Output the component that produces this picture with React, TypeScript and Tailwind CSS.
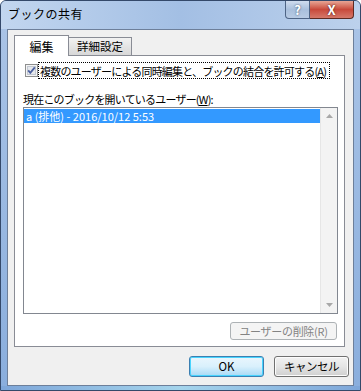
import React from 'react';

const font = { fontFamily: '"Noto Sans CJK JP", "Noto Sans", sans-serif' };

function CheckBox() {
  return (
    <svg width="13" height="13" viewBox="0 0 13 13" className="shrink-0">
      <rect x="0.5" y="0.5" width="12" height="12" fill="#f4f4f4" stroke="#8e8f8f" />
      <rect x="2.5" y="2.5" width="8" height="8" fill="#e6e8ec" stroke="#c2c8d2" />
      <path d="M3.2 6.4 L5.3 8.8 L9.8 3.4" fill="none" stroke="#4c61a0" strokeWidth="1.8" />
    </svg>
  );
}

function Arrow({ up }: { up?: boolean }) {
  return (
    <svg width="7" height="4" viewBox="0 0 7 4">
      <path d={up ? 'M0 4 L3.5 0 L7 4 Z' : 'M0 0 L3.5 4 L7 0 Z'} fill="#a8a8a8" />
    </svg>
  );
}

export default function App() {
  return (
    <div className="w-[361px] h-[391px] flex flex-col bg-[#8fb1de] border border-[#34496a] rounded-t-[6px] overflow-hidden" style={font}>
      {/* title bar */}
      <div className="h-[28px] shrink-0 flex items-start justify-between bg-gradient-to-r from-[#c2d6ef] via-[#a3bfe4] to-[#bcd1ec]">
        <div className="pl-[7px] pt-[6px] text-[12px] leading-[14px] text-black tracking-[0.5px]">ブックの共有</div>
        <div className="flex mr-[6px]">
          <div className="w-[25px] h-[18px] border border-[#4e6485] border-t-0 rounded-bl-[4px] bg-gradient-to-b from-[#cfdcee] via-[#a9bfdc] to-[#b8cbe4] flex items-center justify-center text-white text-[13px] font-bold leading-none [text-shadow:0_0_2px_#2b3f5e]">?</div>
          <div className="w-[44px] h-[18px] border border-[#5e2a22] border-t-0 border-l-0 rounded-br-[4px] bg-gradient-to-b from-[#e7a595] via-[#c8493b] to-[#d5786a] flex items-center justify-center text-white text-[13px] font-bold leading-none [text-shadow:0_0_2px_#3a0e08]">X</div>
        </div>
      </div>

      {/* body with side frames */}
      <div className="flex-1 flex px-[6px] bg-gradient-to-b from-[#a9c3e6] to-[#8aaedd]">
        <div className="flex-1 flex flex-col border border-[#6d7f9a] bg-[#f0f0f0] px-[6px] pt-[4px] pb-[8px]">
          {/* tabs */}
          <div className="flex items-end h-[21px] leading-none">
            <div className="w-[55px] h-[21px] border border-b-0 border-[#898c95] bg-white flex items-center justify-center pt-[2px] -mb-px relative z-10 text-[12px]">編集</div>
            <div className="w-[63px] h-[18px] border border-l-0 border-b-0 border-[#898c95] bg-gradient-to-b from-[#f2f2f2] to-[#d8d8d8] flex items-center justify-center pt-[1px] text-[11.5px]">詳細設定</div>
          </div>

          {/* panel */}
          <div className="w-[331px] h-[292px] border border-[#898c95] bg-white flex flex-col pl-[8px] pr-[6px] pt-[6px] text-[11px] leading-[14px] text-black tracking-[-0.8px]">
            <div className="flex items-center h-[17px]">
              <div className="pl-[2px] w-[15px] shrink-0"><CheckBox /></div>
              <div className="shrink-0 border border-dotted border-black pl-[1px] pr-[3px] h-[17px] flex items-center whitespace-nowrap">
                <span>複数のユーザーによる同時編集と、ブックの結合を許可する(<span className="underline">A</span>)</span>
              </div>
            </div>

            <div className="mt-[13px] h-[14px] whitespace-nowrap">
              現在このブックを開いているユーザー(<span className="underline">W</span>):
            </div>

            <div className="mt-[1px] w-[315px] h-[207px] border border-[#828790] bg-white flex">
              <div className="flex-1 pt-px">
                <div className="h-[14px] bg-[#3399ff] text-white pl-[2px] whitespace-nowrap tracking-[0px]">a (排他) - 2016/10/12 5:53</div>
              </div>
              <div className="w-[17px] bg-[#f3f3f3] border-l border-[#e6e6e6] flex flex-col justify-between items-center py-[6px]">
                <Arrow up />
                <Arrow />
              </div>
            </div>

            <div className="mt-[8px] flex justify-end pr-[1px]">
              <div className="w-[107px] h-[18px] border border-[#adb2b5] rounded-[3px] bg-[#f4f4f4] text-[#838383] flex items-center justify-center tracking-[-0.3px]">
                ユーザーの削除(R)
              </div>
            </div>
          </div>

          {/* footer buttons */}
          <div className="mt-[9px] flex justify-end gap-[10px] -mr-[2px] text-[11.5px] leading-none">
            <div className="w-[75px] h-[21px] rounded-[3px] border border-[#3c7fb1] bg-gradient-to-b from-[#eaf6fd] via-[#d9f0fc] to-[#a7d9f5] shadow-[inset_0_0_0_1px_#48d4fe] flex items-center justify-center">OK</div>
            <div className="w-[75px] h-[21px] rounded-[3px] border border-[#707070] bg-gradient-to-b from-[#f2f2f2] via-[#e5e5e5] to-[#cfcfcf] shadow-[inset_0_0_0_1px_#fcfcfc] flex items-center justify-center tracking-[-0.5px]">キャンセル</div>
          </div>
        </div>
      </div>
      <div className="h-[7px] shrink-0 bg-gradient-to-r from-[#7ea6d9] via-[#a4d4ec] to-[#7ea6d9]" />
    </div>
  );
}
